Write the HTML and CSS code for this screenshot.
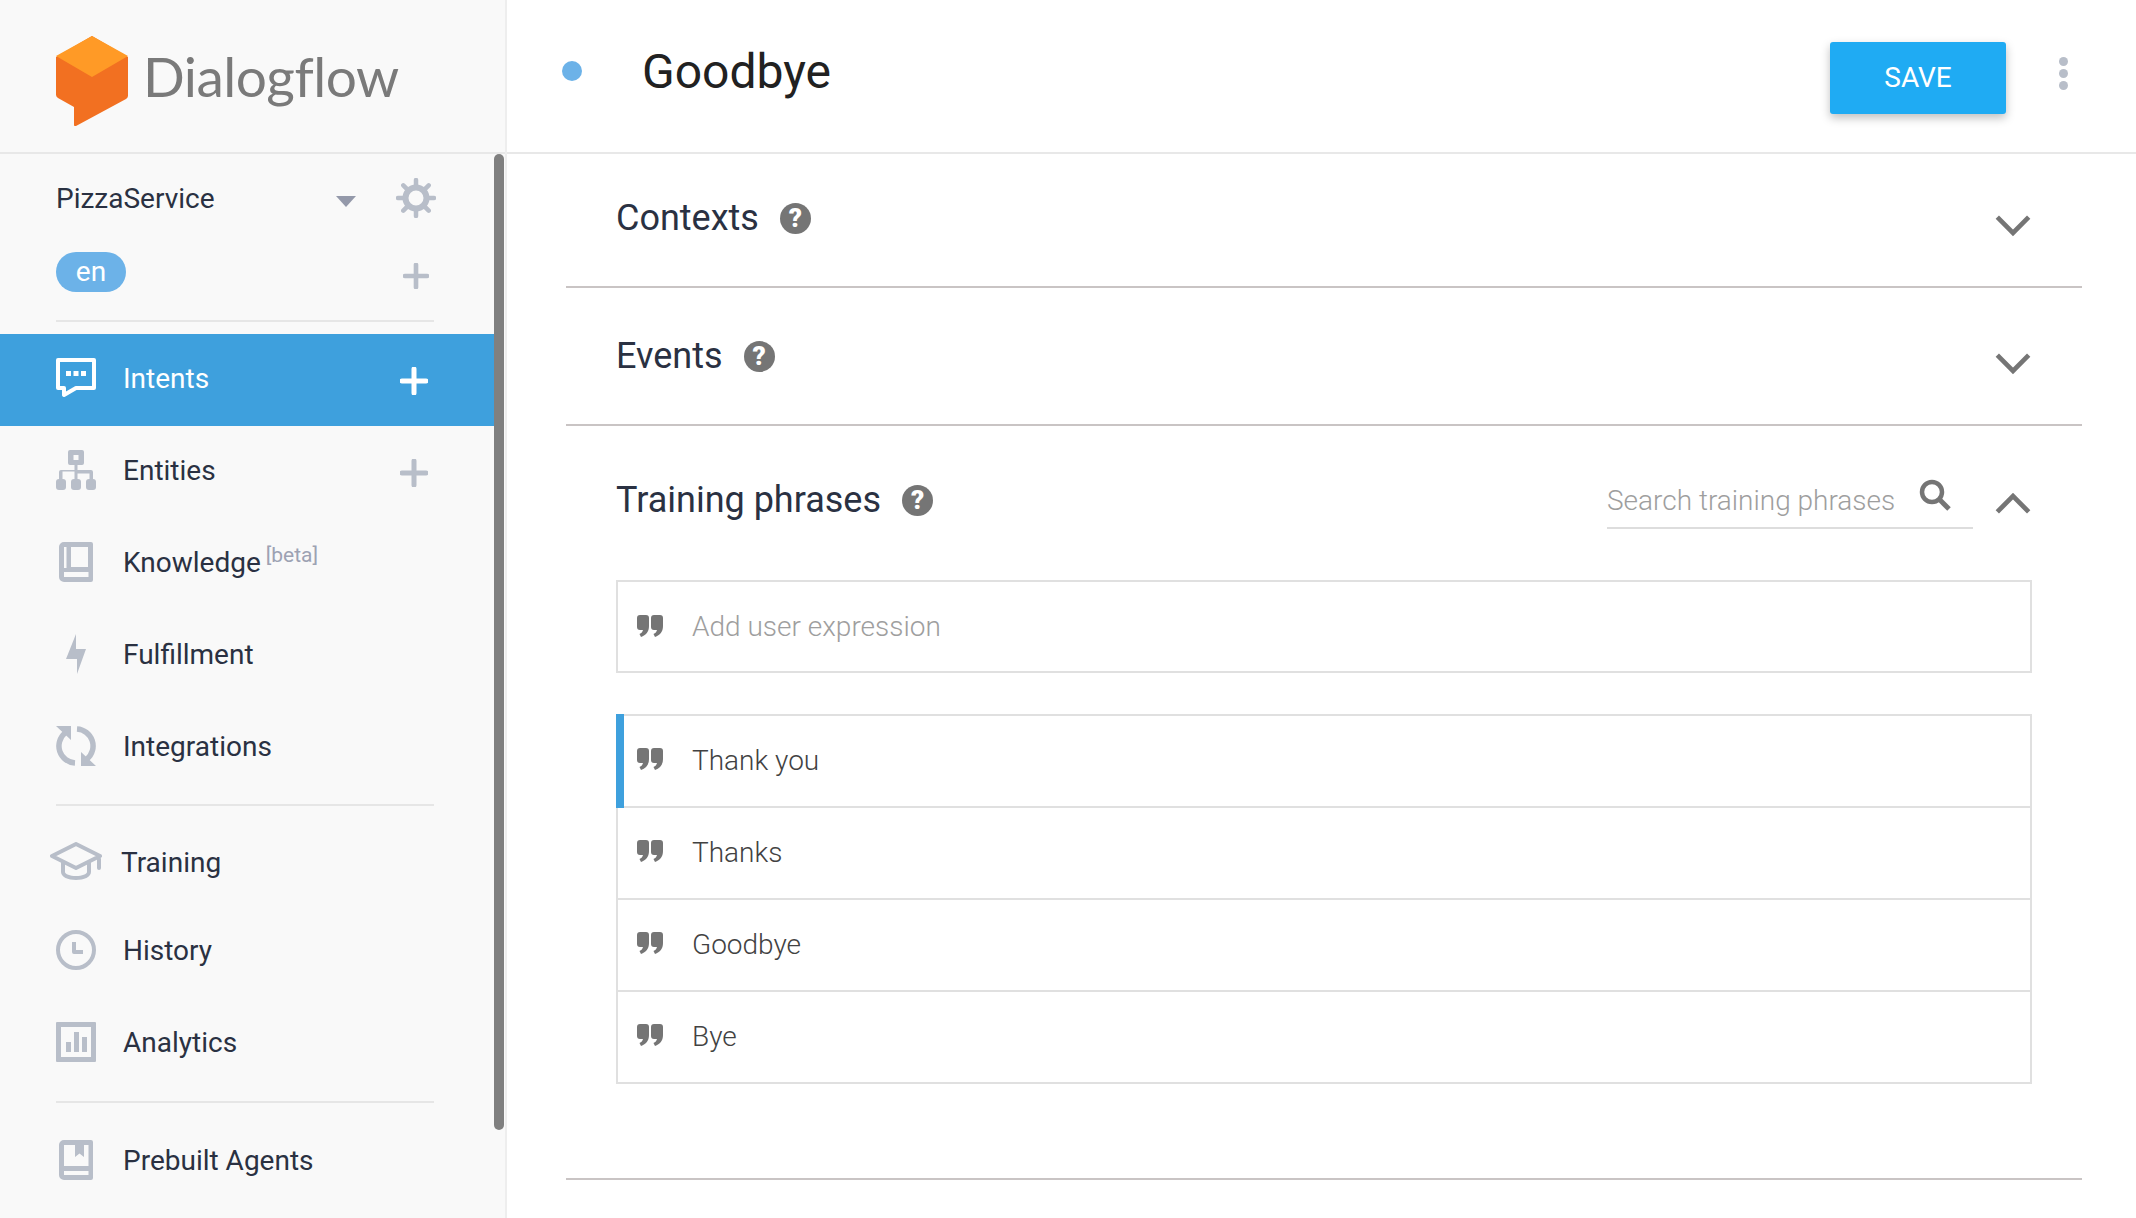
FILE: index.html
```html
<!DOCTYPE html>
<html lang="en">
<head>
<meta charset="UTF-8" />
<title>Dialogflow</title>
<link rel="stylesheet" href="styles.css">
</head>
<body>
<svg class="defs" width="0" height="0">
  <symbol id="quote" viewBox="0 0 26 22">
    <path d="M0 3a3 3 0 0 1 3-3h6a3 3 0 0 1 3 3v8c0 6-3 9-8 11l-1.500-3c2-1 3-2 3.500-4H3a3 3 0 0 1-3-3z"/>
    <path d="M14 3a3 3 0 0 1 3-3h6a3 3 0 0 1 3 3v8c0 6-3 9-8 11l-1.500-3c2-1 3-2 3.500-4H17a3 3 0 0 1-3-3z"/>
  </symbol>
  <symbol id="down" viewBox="0 0 36 22">
    <path d="M3 3l15 15L33 3" fill="none" stroke="currentColor" stroke-width="4.500"/>
  </symbol>
  <symbol id="up" viewBox="0 0 36 22">
    <path d="M3 19L18 4l15 15" fill="none" stroke="currentColor" stroke-width="4.500"/>
  </symbol>
  <symbol id="plus" viewBox="0 0 28 28">
    <path d="M14 2v24M2 14h24" fill="none" stroke="currentColor" stroke-width="5" stroke-linecap="round"/>
  </symbol>
</svg>

<aside class="sidebar">
  <div class="logo">
    <svg class="logo-cube" viewBox="0 0 72 90" width="72" height="90">
      <path fill="#f27021" d="M0 21L36 0l36 21v39a4 4 0 0 1-2 3L20 90c-1 .5-2 0-2-1V71L2 62a4 4 0 0 1-2-3z"/>
      <path fill="#ff9a26" d="M36 0l36 20-36 21L0 20z"/>
    </svg>
    <span class="logo-text">Dialogflow</span>
  </div>

  <div class="agent">
    <span class="agent-name">PizzaService</span>
    <span class="caret"></span>
    <svg class="gear" viewBox="0 0 40 40" width="40" height="40">
      <path d="M20 2v36M2 20h36M7.300 7.300l25.400 25.400M32.700 7.300L7.300 32.700" stroke="#b8bec9" stroke-width="4.500" stroke-linecap="round"/>
      <circle cx="20" cy="20" r="10.500" fill="#f9f9f9" stroke="#b8bec9" stroke-width="6"/>
    </svg>
  </div>
  <div class="lang">
    <span class="lang-pill">en</span>
    <svg class="lang-add"><use href="#plus"/></svg>
  </div>
  <div class="divider divider-lang"></div>

  <nav class="nav">
    <a class="nav-item active">
      <svg class="nav-icon" viewBox="0 0 40 40">
        <path d="M2 2h36v28H20L8 37v-7H2z" fill="none" stroke="#fff" stroke-width="4" stroke-linejoin="round"/>
        <path d="M10 13h5v5h-5zM17.500 13h5v5h-5zM25 13h5v5h-5z" fill="#fff"/>
      </svg>
      <span class="nav-label">Intents</span>
      <svg class="nav-add"><use href="#plus"/></svg>
    </a>
    <a class="nav-item">
      <svg class="nav-icon" viewBox="0 0 40 40">
        <path fill-rule="evenodd" d="M14 0h12a2 2 0 0 1 2 2v11a2 2 0 0 1-2 2h-4.500v5H35a2 2 0 0 1 2 2v8h-3.500v-6.500h-12V30h-3v-8.500h-12V30H3v-8a2 2 0 0 1 2-2h13.500v-5H14a2 2 0 0 1-2-2V2a2 2 0 0 1 2-2zm3.500 5v5h5V5z"/>
        <rect x="0" y="29" width="10" height="11" rx="3"/>
        <rect x="15" y="29" width="10" height="11" rx="3"/>
        <rect x="30" y="29" width="10" height="11" rx="3"/>
      </svg>
      <span class="nav-label">Entities</span>
      <svg class="nav-add"><use href="#plus"/></svg>
    </a>
    <a class="nav-item">
      <svg class="nav-icon" viewBox="0 0 40 40">
        <path fill-rule="evenodd" d="M8 0h27a2 2 0 0 1 2 2v36a2 2 0 0 1-2 2H8a5 5 0 0 1-5-5V5a5 5 0 0 1 5-5zM15 5v20h17V5zM8 5v21h2.500V5zM8 30v5h24.500v-5z"/>
      </svg>
      <span class="nav-label">Knowledge<sup class="beta">[beta]</sup></span>
    </a>
    <a class="nav-item">
      <svg class="nav-icon" viewBox="0 0 40 40">
        <path d="M20 0v15h10L21 40V25H10z"/>
      </svg>
      <span class="nav-label">Fulfillment</span>
    </a>
    <a class="nav-item">
      <svg class="nav-icon" viewBox="0 0 40 40">
        <path d="M9 7A17 17 0 0 0 19 37M21 3A17 17 0 0 1 31 33" fill="none" stroke="#b8bec9" stroke-width="5.500"/>
        <path d="M0 0h15v14zM40 40H25V26z"/>
      </svg>
      <span class="nav-label">Integrations</span>
    </a>
  </nav>
  <div class="divider"></div>

  <nav class="nav nav-tools">
    <a class="nav-item nav-item-training">
      <svg class="nav-icon nav-icon-wide" viewBox="0 0 52 40">
        <path d="M26 2L2 14l24 12 24-12z" fill="none" stroke="#b8bec9" stroke-width="4" stroke-linejoin="round"/>
        <path d="M11 19v11c0 5 7 8 15 8s15-3 15-8V19l-4 2v9c0 2-5 4-11 4s-11-2-11-4v-9z"/>
        <rect x="47" y="15" width="4" height="13" rx="2"/>
      </svg>
      <span class="nav-label">Training</span>
    </a>
    <a class="nav-item">
      <svg class="nav-icon" viewBox="0 0 40 40">
        <circle cx="20" cy="20" r="18" fill="none" stroke="#b8bec9" stroke-width="4"/>
        <path d="M16 12h4v8h7v4H18a2 2 0 0 1-2-2z"/>
      </svg>
      <span class="nav-label">History</span>
    </a>
    <a class="nav-item">
      <svg class="nav-icon" viewBox="0 0 40 40">
        <path fill-rule="evenodd" d="M1 0h38a1 1 0 0 1 1 1v38a1 1 0 0 1-1 1H1a1 1 0 0 1-1-1V1a1 1 0 0 1 1-1zm4 5v30h30V5z"/>
        <path d="M10 20h5v10h-5zM18 10h5v20h-5zM26 15h5v15h-5z"/>
      </svg>
      <span class="nav-label">Analytics</span>
    </a>
  </nav>
  <div class="divider divider-agents"></div>

  <a class="nav-item nav-item-agents">
    <svg class="nav-icon" viewBox="0 0 40 40">
      <path fill-rule="evenodd" d="M8 0h27a2 2 0 0 1 2 2v36a2 2 0 0 1-2 2H8a5 5 0 0 1-5-5V5a5 5 0 0 1 5-5zM8 5v21h24.500V5H28v12l-4.500-3.500L19 17V5zM8 31v4h24.500v-4z"/>
    </svg>
    <span class="nav-label">Prebuilt Agents</span>
  </a>

  <div class="scrollbar"></div>
</aside>

<main class="main">
  <header class="topbar">
    <span class="status-dot"></span>
    <h1 class="intent-title">Goodbye</h1>
    <button class="save-btn">SAVE</button>
    <span class="kebab"><i></i><i></i><i></i></span>
  </header>

  <section class="section section-contexts">
    <h2 class="section-title">Contexts</h2>
    <span class="help">?</span>
    <svg class="chevron"><use href="#down"/></svg>
  </section>
  <section class="section section-events">
    <h2 class="section-title">Events</h2>
    <span class="help">?</span>
    <svg class="chevron"><use href="#down"/></svg>
  </section>

  <section class="section-open">
    <div class="phrases-head">
      <h2 class="section-title">Training phrases</h2>
      <span class="help">?</span>
      <div class="phrase-search">
        <span class="phrase-search-text">Search training phrases</span>
        <svg class="search-icon" viewBox="0 0 32 32" width="32" height="32">
          <circle cx="13" cy="13" r="10" fill="none" stroke="#757575" stroke-width="4.500"/>
          <path d="M20 20l10 10" stroke="#757575" stroke-width="5"/>
        </svg>
      </div>
      <svg class="chevron"><use href="#up"/></svg>
    </div>

    <div class="phrase-row phrase-input">
      <svg class="quote"><use href="#quote"/></svg>
      <span class="phrase-placeholder">Add user expression</span>
    </div>

    <div class="phrase-list">
      <div class="phrase-row selected">
        <svg class="quote"><use href="#quote"/></svg>
        <span>Thank you</span>
      </div>
      <div class="phrase-row">
        <svg class="quote"><use href="#quote"/></svg>
        <span>Thanks</span>
      </div>
      <div class="phrase-row">
        <svg class="quote"><use href="#quote"/></svg>
        <span>Goodbye</span>
      </div>
      <div class="phrase-row">
        <svg class="quote"><use href="#quote"/></svg>
        <span>Bye</span>
      </div>
    </div>
  </section>
  <div class="section-end"></div>
</main>
</body>
</html>
```

FILE: styles.css
```css
html, body {
  margin: 0;
  height: 1218px;
  overflow: hidden;
}
body {
  display: flex;
  font-family: Roboto, "Liberation Sans", sans-serif;
  color: #2a3142;
  background: #fff;
}
.defs {
  position: absolute;
}

/* sidebar */
.sidebar {
  position: relative;
  flex: 0 0 505px;
  background: #f9f9f9;
  border-right: 2px solid #eeeeee;
  overflow: hidden;
}
.logo {
  display: flex;
  align-items: center;
  height: 152px;
  padding-left: 56px;
  border-bottom: 2px solid #e8e8e8;
}
.logo-cube {
  margin-top: 9px;
}
.logo-text {
  margin-left: 15px;
  font-family: Lato, sans-serif;
  font-size: 55px;
  color: #7a7a7a;
  letter-spacing: -0.5px;
}
.agent {
  display: flex;
  align-items: center;
  height: 88px;
  padding-left: 56px;
}
.agent-name {
  flex: 1;
  font-size: 28px;
}
.caret {
  width: 0;
  height: 0;
  border-left: 10px solid transparent;
  border-right: 10px solid transparent;
  border-top: 11px solid #9499aa;
  margin-top: 6px;
}
.gear {
  margin: 0 69px 0 40px;
}
.lang {
  display: flex;
  align-items: center;
  justify-content: space-between;
  height: 68px;
  padding: 0 76px 0 56px;
}
.lang-pill {
  width: 70px;
  height: 40px;
  line-height: 40px;
  margin-top: -8px;
  text-align: center;
  border-radius: 20px;
  background: #6cb2e8;
  color: #fff;
  font-size: 28px;
}
.lang-add {
  width: 26px;
  height: 26px;
  color: #b8bec9;
}
.divider {
  height: 2px;
  margin: 0 71px 0 56px;
  background: #e6e6e6;
}
.divider-lang {
  margin-top: 10px;
}
.divider-agents {
  margin-top: 13px;
}
.nav {
  margin-top: 12px;
  margin-bottom: 12px;
}
.nav-tools {
  margin-top: 10px;
  margin-bottom: 0;
}
.nav-item {
  display: flex;
  align-items: center;
  box-sizing: border-box;
  height: 92px;
  padding-left: 56px;
  font-size: 28px;
}
.nav-item.active {
  margin-right: 11px;
  margin-bottom: -2px;
  padding-bottom: 4px;
  background: #3ea0dd;
  color: #fff;
}
.nav-item-training {
  margin-bottom: -4px;
}
.nav-item-agents {
  margin-top: 11px;
}
.nav-icon {
  flex: 0 0 40px;
  width: 40px;
  height: 40px;
  margin-right: 27px;
  fill: #b8bec9;
}
.nav-icon-wide {
  flex: 0 0 52px;
  width: 52px;
  margin-left: -6px;
  margin-right: 19px;
}
.nav-label {
  flex: 1;
}
.beta {
  margin-left: 5px;
  font-size: 21px;
  color: #9da2b3;
  vertical-align: 10px;
  line-height: 0;
}
.nav-add {
  width: 28px;
  height: 28px;
  margin-top: 5px;
  margin-right: 77px;
  color: #b8bec9;
}
.active .nav-add {
  margin-right: 66px;
  color: #fff;
}
.scrollbar {
  position: absolute;
  top: 154px;
  right: 1px;
  width: 10px;
  height: 976px;
  border-radius: 5px;
  background: #808080;
}

/* main */
.main {
  flex: 1;
  min-width: 0;
}
.topbar {
  display: flex;
  align-items: center;
  height: 152px;
  padding-left: 55px;
  border-bottom: 2px solid #e8e8e8;
}
.status-dot {
  width: 20px;
  height: 20px;
  border-radius: 50%;
  background: #6cb2e8;
  margin-top: -10px;
}
.intent-title {
  flex: 1;
  margin: -10px 0 0 60px;
  font-size: 48px;
  font-weight: 400;
  color: #212121;
}
.save-btn {
  width: 176px;
  height: 72px;
  margin-top: 3px;
  border: none;
  border-radius: 3px;
  background: #1fabf3;
  color: #fff;
  font-family: Roboto, sans-serif;
  font-size: 28px;
  box-shadow: 0 4px 10px rgba(0,0,0,0.25);
}
.kebab {
  display: flex;
  flex-direction: column;
  gap: 3px;
  margin: -6px 68px 0 53px;
}
.kebab i {
  width: 9px;
  height: 9px;
  border-radius: 50%;
  background: #b8bec9;
}
.section {
  display: flex;
  align-items: center;
  margin: 0 54px 0 59px;
  padding: 0 0 0 50px;
  border-bottom: 2px solid #c9c4c4;
}
.section-contexts {
  height: 132px;
}
.section-contexts .section-title,
.section-contexts .help {
  margin-top: -4px;
}
.section-contexts .chevron {
  margin-top: 10px;
}
.section-events {
  height: 136px;
}
.section-events .section-title,
.section-events .help {
  margin-top: 0;
}
.section-title {
  margin: -6px 0 0;
  font-size: 36px;
  font-weight: 400;
}
.help {
  width: 31px;
  height: 31px;
  line-height: 31px;
  margin: -6px 0 0 21px;
  border-radius: 50%;
  background: #757575;
  color: #fff;
  font-size: 26px;
  font-weight: 900;
  text-align: center;
}
.chevron {
  width: 38px;
  height: 23px;
  margin-left: auto;
  margin-right: 50px;
  color: #757575;
  margin-top: 14px;
}
.section-open {
  margin: 0 104px 0 109px;
}
.phrases-head {
  display: flex;
  align-items: center;
  height: 154px;
}
.phrases-head .chevron {
  margin-left: 21px;
  margin-right: 0;
  margin-top: 0;
}
.phrase-search {
  display: flex;
  align-items: center;
  justify-content: space-between;
  width: 366px;
  height: 54px;
  margin-left: auto;
  margin-top: -4px;
  border-bottom: 2px solid #dddddd;
  color: #9e9e9e;
  font-size: 28px;
  font-weight: 300;
}
.search-icon {
  margin: -10px 22px 0 0;
}
.phrase-row {
  display: flex;
  align-items: center;
  height: 88px;
  padding-left: 19px;
  padding-bottom: 2px;
  border-bottom: 2px solid #e0e0e0;
  font-size: 28px;
  font-weight: 300;
  color: #424242;
}
.phrase-input {
  height: 89px;
  padding-bottom: 0;
  border: 2px solid #e0e0e0;
  margin-bottom: 41px;
}
.phrase-placeholder {
  color: #9e9e9e;
}
.phrase-list {
  border: 2px solid #e0e0e0;
  border-bottom: 0;
}
.phrase-row.selected {
  position: relative;
}
.phrase-row.selected::before {
  content: "";
  position: absolute;
  top: -2px;
  bottom: -2px;
  left: -2px;
  width: 8px;
  background: #3ea0dd;
}
.quote {
  width: 26px;
  height: 22px;
  margin-right: 29px;
  margin-top: -2px;
  fill: #757575;
}
.section-end {
  margin: 94px 54px 0 59px;
  border-top: 2px solid #c9c4c4;
}
```
